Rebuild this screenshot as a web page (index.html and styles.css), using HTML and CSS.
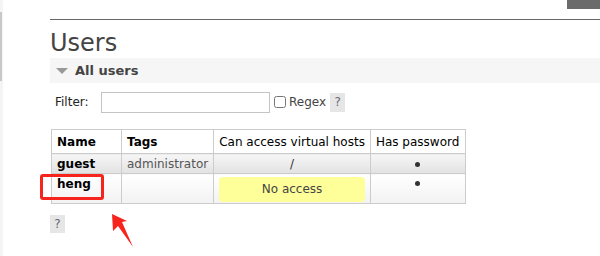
FILE: index.html
```html
<!DOCTYPE html>
<html lang="en">
<head>
  <meta charset="UTF-8">
  <title>Users</title>
  <link rel="stylesheet" href="styles.css">
</head>
<body>
  <div class="frame">
    <div class="side-scroll"><div class="side-thumb"></div></div>

    <div class="main">
      <div class="topbar">
        <div class="top-tab"></div>
      </div>

      <h1>Users</h1>

      <div class="section-head">
        <span class="toggle"></span>
        <span>All users</span>
      </div>

      <div class="filter-row">
        <label class="filter-label" for="filter">Filter:</label>
        <input type="text" id="filter" class="filter-input">
        <label class="regex"><input type="checkbox"> Regex</label>
        <span class="help">?</span>
      </div>

      <table class="list">
        <thead>
          <tr>
            <th class="strong">Name</th>
            <th class="strong">Tags</th>
            <th>Can access virtual hosts</th>
            <th>Has password</th>
          </tr>
        </thead>
        <tbody>
          <tr class="alt1">
            <td class="user">guest</td>
            <td class="tags">administrator</td>
            <td class="c">/</td>
            <td class="c"><span class="dot"></span></td>
          </tr>
          <tr class="alt2">
            <td class="user">heng</td>
            <td></td>
            <td><div class="no-access">No access</div></td>
            <td class="c"><span class="dot"></span></td>
          </tr>
        </tbody>
      </table>

      <span class="help help-bottom">?</span>
    </div>

    <!-- screenshot annotations -->
    <div class="mark-box"></div>
    <svg class="mark-arrow" width="30" height="40" viewBox="0 0 30 40">
      <path d="M2 1 L3 18 L8 13 L23 34 L12 9 L17 8 Z" fill="#f7241e"/>
    </svg>
  </div>
</body>
</html>
```

FILE: styles.css
```css
body {
  margin: 0;
  font-family: Verdana, "DejaVu Sans", sans-serif;
  font-size: 12px;
  color: #444;
  background: #fff;
}

.frame {
  position: relative;
  display: flex;
  width: 600px;
  height: 256px;
  overflow: hidden;
}

.side-scroll {
  width: 3px;
  background: #f4f4f4;
  padding-top: 12px;
}

.side-thumb {
  width: 2px;
  height: 69px;
  background: #c8c8c8;
}

.main {
  flex: 1;
  padding-left: 47px;
}

.topbar {
  height: 19px;
  border-bottom: 1px solid #666;
  display: flex;
  justify-content: flex-end;
}

.top-tab {
  width: 33px;
  height: 9px;
  background: #6b6b6b;
}

h1 {
  margin: 0;
  padding-top: 9px;
  font-size: 24px;
  font-weight: normal;
  line-height: 29px;
  color: #444;
}

.section-head {
  height: 25px;
  background: #f6f6f6;
  display: flex;
  align-items: center;
  gap: 7px;
  padding-left: 6px;
  font-size: 13px;
  font-weight: bold;
  color: #444;
}

.toggle {
  width: 0;
  height: 0;
  border-left: 6px solid transparent;
  border-right: 6px solid transparent;
  border-top: 6px solid #999;
}

.filter-row {
  display: flex;
  align-items: center;
  margin-top: 8px;
  height: 22px;
  padding-left: 5px;
}

.filter-label {
  color: #222;
  width: 46px;
}

.filter-input {
  box-sizing: border-box;
  width: 169px;
  height: 21px;
  margin: 0;
  border: 1px solid #c4c4c4;
  background: #fff;
}

.regex {
  display: flex;
  align-items: center;
  margin-left: 3px;
  color: #444;
}

.regex input {
  width: 12px;
  height: 12px;
  margin: 0 3px 0 1px;
}

.help {
  display: inline-block;
  width: 15px;
  height: 19px;
  line-height: 19px;
  margin-left: 4px;
  text-align: center;
  background: #e6e6e6;
  color: #667;
  font-size: 12px;
}

.list {
  margin-top: 16px;
  margin-left: 1px;
  border-collapse: collapse;
  color: #000;
}

.list th,
.list td {
  border: 1px solid #ccc;
  padding: 0 5px;
  text-align: left;
}

.list th {
  height: 23px;
  font-weight: normal;
  background: #fff;
  white-space: nowrap;
}

.list th.strong {
  font-weight: bold;
}

.list th:nth-child(1) { width: 59px; }
.list th:nth-child(2) { width: 81px; }
.list th:nth-child(3) { width: 145px; }
.list th:nth-child(4) { width: 84px; }

.alt1 td {
  height: 19px;
  background: linear-gradient(#f6f6f6, #e2e2e2);
}

.alt2 td {
  height: 28px;
  vertical-align: top;
  padding-top: 1px;
  padding-bottom: 0;
  background: linear-gradient(#fff, #f2f2f2);
}

.alt2 td.user {
  height: 26px;
  padding-top: 3px;
}

.user {
  font-weight: bold;
}

.tags {
  color: #555;
}

.list td.c {
  text-align: center;
  color: #333;
}

.dot {
  display: inline-block;
  width: 5px;
  height: 5px;
  border-radius: 50%;
  background: #333;
  vertical-align: middle;
}

.alt2 .dot {
  vertical-align: top;
  margin-top: 6px;
}

.no-access {
  margin: 2px 0 0 0;
  height: 25px;
  line-height: 25px;
  text-align: center;
  background: #ffff99;
  border-radius: 4px;
  color: #444;
}

.help-bottom {
  display: block;
  margin: 11px 0 0 0;
  height: 18px;
  line-height: 18px;
}

.mark-box {
  position: absolute;
  left: 40px;
  top: 174px;
  width: 58px;
  height: 20px;
  border: 3px solid #f7241e;
  border-radius: 3px;
}

.mark-arrow {
  position: absolute;
  left: 110px;
  top: 213px;
}
```
